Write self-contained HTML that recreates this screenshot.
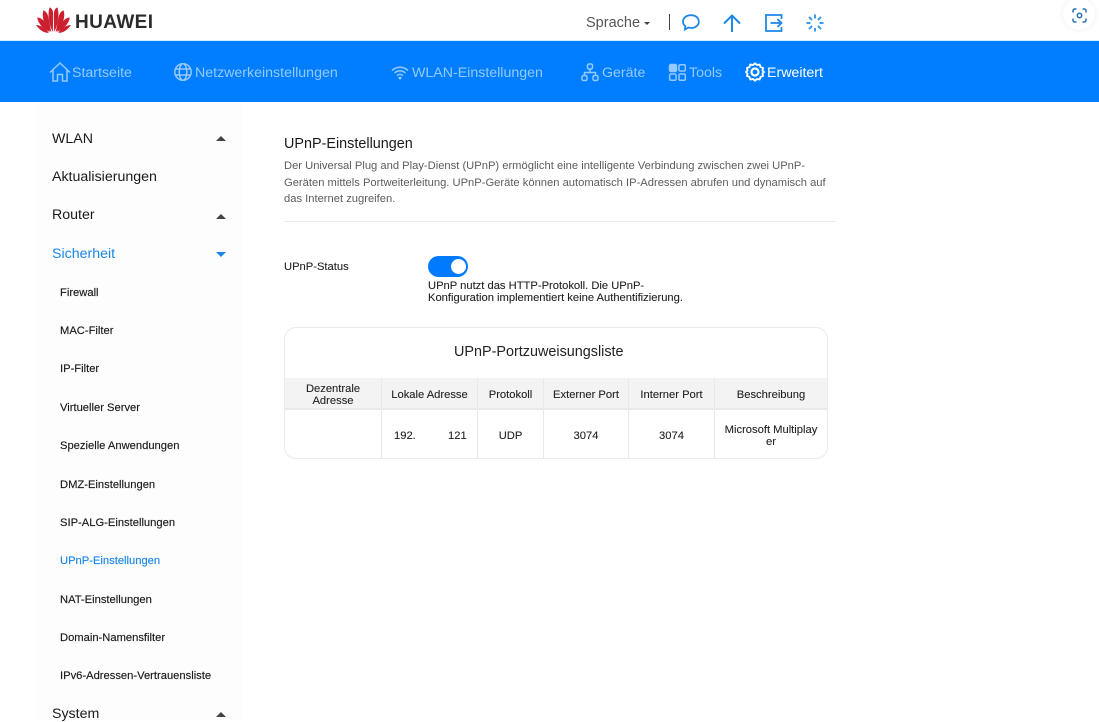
<!DOCTYPE html>
<html lang="de"><head><meta charset="utf-8"><title>UPnP-Einstellungen</title>
<style>
html,body{margin:0;padding:0;background:#fff}
body{width:1099px;height:721px;overflow:hidden;position:relative;font-family:"Liberation Sans",Arial,sans-serif;color:#111}
.a,.t{position:absolute}
.t{white-space:nowrap}
.n{font-size:14.2px;line-height:16px;top:65px;color:#95caff}
.m{font-size:14.2px;line-height:16px;left:52px;color:#1a1a1a}
.s{font-size:11.2px;line-height:14px;left:60px;color:#1a1a1a;-webkit-text-stroke:.15px #1a1a1a}
.h{font-size:11.2px;line-height:12px;text-align:center;color:#222;white-space:normal;-webkit-text-stroke:.1px #222}
.l{position:absolute;background:#e9e9e9}
svg{position:absolute;overflow:visible}
.tri{position:absolute;left:216px;width:0;height:0;border-left:5px solid transparent;border-right:5px solid transparent;border-bottom:5px solid #444}
</style></head><body>
<!-- logo -->
<svg style="left:36px;top:7px" width="35" height="26" viewBox="0 0 35 26" fill="#cc1f30">
<path d="M16.900 25 C13 18 11.300 8 13.500 0.500 C16 1 17.100 4 17.100 7 C17.100 13 17 20 16.900 25Z"/>
<path d="M18.100 25 C22 18 23.700 8 21.500 0.500 C19 1 17.900 4 17.900 7 C17.900 13 18 20 18.100 25Z"/>
<path d="M15.300 25 C9 20 5.300 11 7.300 3.500 C10 4 11.700 7 12.300 10 C13.300 15 14.500 21 15.300 25Z"/>
<path d="M19.700 25 C26 20 29.700 11 27.700 3.500 C25 4 23.300 7 22.700 10 C21.700 15 20.500 21 19.700 25Z"/>
<path d="M13.800 25 C7.500 22 2.200 17 1.200 10.500 C4 10.500 7 12.500 9 15.500 C11 18.500 12.800 22 13.800 25Z"/>
<path d="M21.200 25 C27.500 22 32.800 17 33.800 10.500 C31 10.500 28 12.500 26 15.500 C24 18.500 22.200 22 21.200 25Z"/>
<path d="M0 18 C4 23.500 8 26 12.800 25.800 C9.500 21.200 4.500 18 0 18Z"/>
<path d="M35 18 C31 23.500 27 26 22.200 25.800 C25.500 21.200 30.500 18 35 18Z"/>
</svg>
<div class="t" style="left:75px;top:13px;font-size:19px;line-height:20px;font-weight:700;color:#2b2b2b;letter-spacing:.4px">HUAWEI</div>
<!-- top right -->
<div class="t" style="left:586px;top:15px;font-size:14.500px;line-height:16px;color:#555">Sprache</div>
<div class="a" style="left:644px;top:22px;width:0;height:0;border-left:3px solid transparent;border-right:3px solid transparent;border-top:3px solid #444"></div>
<div class="a" style="left:669px;top:14px;width:1px;height:16px;background:#444"></div>
<svg style="left:682px;top:14px" width="18" height="18" viewBox="0 0 18 18" fill="none" stroke="#1d88e8" stroke-width="1.800"><path d="M9 1.200C13.500 1.200 16.800 3.800 16.800 7.600C16.800 11.400 13.400 14 9.500 14C8.400 14 7.500 13.900 6.500 13.500L3 15.500L3.300 12.200C1.800 11 1 9.400 1 7.600C1 3.800 4.500 1.200 9 1.200Z"/></svg>
<svg style="left:723px;top:14px" width="18" height="19" viewBox="0 0 18 19" fill="none" stroke="#1d88e8" stroke-width="2"><path d="M9 18V1.500M1 9.500L9 1.500L17 9.500"/></svg>
<svg style="left:765px;top:14px" width="18" height="18" viewBox="0 0 18 18" fill="none" stroke="#1d88e8" stroke-width="1.800"><path d="M16.500 5V1H1V17H16.500V13M5.500 9H16.500M12.500 5L16.500 9L12.500 13"/></svg>
<svg style="left:806px;top:14px" width="18" height="18" viewBox="0 0 18 18" fill="none" stroke="#3a9bef" stroke-width="2"><path d="M9 0.500V4.500M15 3L12 6M17.500 9H13.500M15 15L12 12M9 17.500V14M3 15L6 12M0.500 9H4.500M3 3L6 6"/></svg>
<!-- floating button -->
<div class="a" style="left:1063px;top:-2px;width:32px;height:32px;border-radius:50%;background:#fff;box-shadow:0 0 6px rgba(0,0,0,.07)"></div>
<svg style="left:1072px;top:8px" width="15" height="15" viewBox="0 0 15 15" fill="none" stroke="#2a6fb5" stroke-width="1.500"><path d="M1 4.500V3Q1 1 3 1H4.500M10.500 1H12Q14 1 14 3V4.500M14 10.500V12Q14 14 12 14H10.500M4.500 14H3Q1 14 1 12V10.500"/><circle cx="7.500" cy="7.500" r="2.200"/></svg>
<!-- nav -->
<div class="a" style="left:0;top:41px;width:1099px;height:61px;background:#007eff"></div>
<div class="a" style="left:0;top:40px;width:1099px;height:1px;background:#c9f0fa"></div>
<svg style="left:49px;top:62px" width="22" height="20" viewBox="0 0 22 20" fill="none" stroke="#95caff" stroke-width="1.500"><path d="M1 10.500L11 1L21 10.500M4 8.500V19H8.500V12.500H13.500V19H18V8.500"/></svg>
<div class="t n" style="left:72px">Startseite</div>
<svg style="left:174px;top:63px" width="18" height="18" viewBox="0 0 18 18" fill="none" stroke="#95caff" stroke-width="1.500"><circle cx="9" cy="9" r="8.200"/><ellipse cx="9" cy="9" rx="3.800" ry="8.200"/><path d="M1.500 6H16.500M1.500 12H16.500"/></svg>
<div class="t n" style="left:195px">Netzwerkeinstellungen</div>
<svg style="left:391px;top:65px" width="18" height="15" viewBox="0 0 18 15" fill="none" stroke="#95caff" stroke-width="1.500"><path d="M1 5.500C5.500 1.200 12.500 1.200 17 5.500M3.500 8C6.500 5.200 11.500 5.200 14.500 8M6 10.500C7.800 9 10.200 9 12 10.500"/><circle cx="9" cy="13" r="1.500" fill="#95caff" stroke="none"/></svg>
<div class="t n" style="left:412px">WLAN-Einstellungen</div>
<svg style="left:581px;top:63px" width="18" height="18" viewBox="0 0 18 18" fill="none" stroke="#95caff" stroke-width="1.500"><rect x="6.500" y="1" width="5" height="5" rx="1.500"/><rect x="1" y="12.500" width="5" height="5" rx="1.500"/><rect x="12" y="12.500" width="5" height="5" rx="1.500"/><path d="M9 6V9.500M3.500 12.500V9.500H14.500V12.500"/></svg>
<div class="t n" style="left:602px">Geräte</div>
<svg style="left:669px;top:64px" width="17" height="17" viewBox="0 0 17 17" fill="none" stroke="#95caff" stroke-width="1.500"><rect x=".500" y=".500" width="7" height="7" rx="1.500" fill="#95caff"/><rect x="10" y=".700" width="6.300" height="6.300" rx="1.300"/><rect x=".700" y="10" width="6.300" height="6.300" rx="1.300"/><rect x="10" y="10" width="6.300" height="6.300" rx="1.300"/></svg>
<div class="t n" style="left:689px">Tools</div>
<svg style="left:745px;top:62px" width="20" height="20" viewBox="0 0 20 20" fill="none" stroke="#fff" stroke-width="1.900"><path d="M10 1.200L12 3L14.600 2.500L15.500 5L18 6L17.500 8.500L19 10L17.500 11.500L18 14L15.500 15L14.600 17.500L12 17L10 18.800L8 17L5.400 17.500L4.500 15L2 14L2.500 11.500L1 10L2.500 8.500L2 6L4.500 5L5.400 2.500L8 3Z" stroke-linejoin="round"/><circle cx="10" cy="10" r="3.500" stroke-width="2.200"/></svg>
<div class="t n" style="left:767px;color:#fff">Erweitert</div>
<!-- sidebar -->
<div class="a" style="left:36px;top:102px;width:207px;height:619px;background:#fdfdfd"></div>
<div class="t m" style="top:131px">WLAN</div><div class="tri" style="top:136px"></div>
<div class="t m" style="top:169px">Aktualisierungen</div>
<div class="t m" style="top:207px">Router</div><div class="tri" style="top:214px"></div>
<div class="t m" style="top:246px;color:#1a86e8">Sicherheit</div>
<div class="tri" style="top:252px;border-bottom:0;border-top:5px solid #1a86e8"></div>
<div class="t s" style="top:286px">Firewall</div>
<div class="t s" style="top:324px">MAC-Filter</div>
<div class="t s" style="top:362px">IP-Filter</div>
<div class="t s" style="top:401px">Virtueller Server</div>
<div class="t s" style="top:439px">Spezielle Anwendungen</div>
<div class="t s" style="top:478px">DMZ-Einstellungen</div>
<div class="t s" style="top:516px">SIP-ALG-Einstellungen</div>
<div class="t s" style="top:554px;color:#1a86e8;-webkit-text-stroke-color:#1a86e8">UPnP-Einstellungen</div>
<div class="t s" style="top:593px">NAT-Einstellungen</div>
<div class="t s" style="top:631px">Domain-Namensfilter</div>
<div class="t s" style="top:669px">IPv6-Adressen-Vertrauensliste</div>
<div class="t m" style="top:706px">System</div><div class="tri" style="top:712px"></div>
<!-- content -->
<div class="t" style="left:284px;top:136px;font-size:14.400px;line-height:16px;color:#1a1a1a">UPnP-Einstellungen</div>
<div class="t" style="left:284px;top:158px;font-size:11.200px;line-height:16.500px;color:#5c5c5c">Der Universal Plug and Play-Dienst (UPnP) ermöglicht eine intelligente Verbindung zwischen zwei UPnP-<br>Geräten mittels Portweiterleitung. UPnP-Geräte können automatisch IP-Adressen abrufen und dynamisch auf<br>das Internet zugreifen.</div>
<div class="l" style="left:284px;top:221px;width:552px;height:1px"></div>
<div class="t" style="left:284px;top:261px;font-size:11.200px;line-height:13px;color:#222;-webkit-text-stroke:.1px #222">UPnP-Status</div>
<div class="a" style="left:428px;top:256px;width:40px;height:21px;border-radius:11px;background:#007aff"></div>
<div class="a" style="left:451px;top:259px;width:15px;height:15px;border-radius:50%;background:#fff"></div>
<div class="t" style="left:428px;top:280px;font-size:11.200px;line-height:12px;color:#222;-webkit-text-stroke:.1px #222">UPnP nutzt das HTTP-Protokoll. Die UPnP-<br>Konfiguration implementiert keine Authentifizierung.</div>
<!-- table -->
<div class="a" style="left:284px;top:327px;width:542px;height:130px;border:1px solid #eaeaea;border-radius:12px"></div>
<div class="t" style="left:454px;top:344px;font-size:14.400px;line-height:16px;color:#222">UPnP-Portzuweisungsliste</div>
<div class="a" style="left:285px;top:378px;width:542px;height:31px;background:#f3f3f3"></div>
<div class="l" style="left:285px;top:408px;width:542px;height:2px"></div>
<div class="l" style="left:381px;top:378px;width:1px;height:80px"></div>
<div class="l" style="left:477px;top:378px;width:1px;height:80px"></div>
<div class="l" style="left:543px;top:378px;width:1px;height:80px"></div>
<div class="l" style="left:628px;top:378px;width:1px;height:80px"></div>
<div class="l" style="left:714px;top:378px;width:1px;height:80px"></div>
<div class="a h" style="left:285px;width:96px;top:383px">Dezentrale<br>Adresse</div>
<div class="a h" style="left:382px;width:95px;top:389px">Lokale Adresse</div>
<div class="a h" style="left:478px;width:65px;top:389px">Protokoll</div>
<div class="a h" style="left:544px;width:84px;top:389px">Externer Port</div>
<div class="a h" style="left:629px;width:85px;top:389px">Interner Port</div>
<div class="a h" style="left:715px;width:112px;top:389px">Beschreibung</div>
<div class="t h" style="left:394px;top:430px;white-space:nowrap">192.</div>
<div class="t h" style="left:448px;top:430px;white-space:nowrap">121</div>
<div class="a h" style="left:478px;width:65px;top:430px">UDP</div>
<div class="a h" style="left:544px;width:84px;top:430px">3074</div>
<div class="a h" style="left:629px;width:85px;top:430px">3074</div>
<div class="a h" style="left:715px;width:112px;top:424px">Microsoft Multiplay<br>er</div>
</body></html>
